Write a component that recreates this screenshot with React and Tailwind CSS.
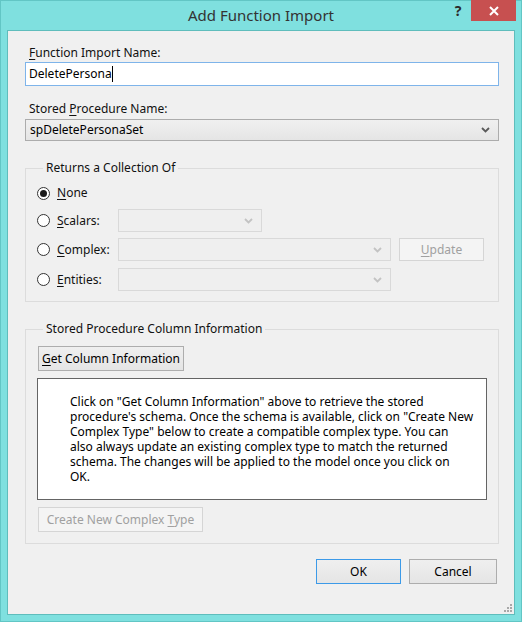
import React from "react";

const font = { fontFamily: '"Segoe UI", "Noto Sans", sans-serif' };

const Mn = ({ children }) => <span className="underline underline-offset-[2px] decoration-1">{children}</span>;

const Chevron = ({ disabled }) => (
  <svg width="9" height="6" viewBox="0 0 9 6" className="shrink-0">
    <path d="M1 1 L4.5 4.5 L8 1" fill="none" stroke={disabled ? "#c3c3c3" : "#5a5a5a"} strokeWidth="1.8" />
  </svg>
);

const Dropdown = ({ value, disabled, className }) => (
  <div
    className={
      "flex items-center pl-[4px] pr-[8px] border " +
      (disabled
        ? "border-[#d9d9d9] bg-[#efefef] "
        : "border-[#acacac] bg-gradient-to-b from-[#f0f0f0] to-[#e5e5e5] ") +
      className
    }
  >
    <span className="flex-1 text-black">{value}</span>
    <Chevron disabled={disabled} />
  </div>
);

const Radio = ({ checked, children }) => (
  <div className="flex items-center w-[81px] shrink-0">
    <span className="w-[13px] h-[13px] rounded-full border border-[#333] bg-white flex items-center justify-center">
      {checked && <span className="w-[7px] h-[7px] rounded-full bg-[#1a1a1a]" />}
    </span>
    <span className="ml-[7px]">{children}</span>
  </div>
);

const Button = ({ children, className, disabled, focused }) => (
  <div
    className={
      "flex items-center justify-center border " +
      (disabled
        ? "border-[#d5d5d5] bg-[#f4f4f4] text-[#a0a0a0] "
        : focused
        ? "border-[#3c9ae8] bg-gradient-to-b from-[#efefef] to-[#e5e5e5] text-black "
        : "border-[#adadad] bg-gradient-to-b from-[#efefef] to-[#e5e5e5] text-black ") +
      className
    }
  >
    {children}
  </div>
);

export default function App() {
  return (
    <div style={font} className="w-[522px] h-[622px] bg-[#7fe0df] border border-[#62c6c5] flex flex-col text-[12px] leading-[16px] text-[#111]">
      {/* title bar */}
      <div className="relative h-[29px] shrink-0">
        <div className="text-center text-[15px] leading-[28px] text-[#333]">Add Function Import</div>
        <div className="absolute top-[-1px] right-[5px] flex">
          <div className="w-[26px] h-[21px] flex items-center justify-center font-bold text-[14px] text-[#2b2b2b]">?</div>
          <div className="w-[45px] h-[21px] bg-[#c75050] flex items-center justify-center">
            <svg width="10" height="10" viewBox="0 0 10 10">
              <path d="M1 1 L9 9 M9 1 L1 9" stroke="#fff" strokeWidth="2" />
            </svg>
          </div>
        </div>
      </div>

      {/* client */}
      <div className="relative mx-[6px] h-[585px] border border-[#5fbdbc] bg-[#f0f0f0] pl-[17px] pr-[15px] flex flex-col">
        <div className="mt-[14px] pl-[4px]">
          <Mn>F</Mn>unction Import Name:
        </div>
        <div className="mt-[1px] h-[24px] border border-[#7eb4ea] bg-white flex items-center pl-[3px]">
          <span className="text-black">DeletePersona</span>
          <span className="w-px h-[16px] bg-black" />
        </div>

        <div className="mt-[15px] pl-[4px]">
          Stored <Mn>P</Mn>rocedure Name:
        </div>
        <Dropdown value="spDeletePersonaSet" className="mt-[2px] h-[22px]" />

        <fieldset className="mt-[19px] border border-[#dcdcdc] pl-[11px] pb-[12px] h-[142px]">
          <legend className="ml-[6px] px-[3px] leading-[16px]">Returns a Collection Of</legend>
          <div className="mt-[9px] flex items-center h-[16px]">
            <Radio checked>
              <Mn>N</Mn>one
            </Radio>
          </div>
          <div className="mt-[8px] flex items-center">
            <Radio>
              <Mn>S</Mn>calars:
            </Radio>
            <Dropdown disabled className="w-[144px] h-[23px]" />
          </div>
          <div className="mt-[6px] flex items-center">
            <Radio>
              <Mn>C</Mn>omplex:
            </Radio>
            <Dropdown disabled className="w-[273px] h-[23px]" />
            <Button disabled className="ml-[8px] w-[85px] h-[23px]">
              <span>
                <Mn>U</Mn>pdate
              </span>
            </Button>
          </div>
          <div className="mt-[7px] flex items-center">
            <Radio>
              <Mn>E</Mn>ntities:
            </Radio>
            <Dropdown disabled className="w-[273px] h-[23px]" />
          </div>
        </fieldset>

        <fieldset className="mt-[19px] border border-[#dcdcdc] pl-[11px] pr-[11px] h-[223px]">
          <legend className="ml-[6px] px-[3px] leading-[16px]">Stored Procedure Column Information</legend>
          <Button className="mt-[9px] w-[146px] h-[25px] ml-[1px]">
            <span>
              <Mn>G</Mn>et Column Information
            </span>
          </Button>
          <div className="mt-[7px] h-[122px] border border-[#646464] bg-white pl-[32px] pt-[15px] leading-[15px] text-black">
            Click on "Get Column Information" above to retrieve the stored
            <br />
            procedure's schema. Once the schema is available, click on "Create New
            <br />
            Complex Type" below to create a compatible complex type. You can
            <br />
            also always update an existing complex type to match the returned
            <br />
            schema. The changes will be applied to the model once you click on
            <br />
            OK.
          </div>
          <Button disabled className="mt-[7px] ml-[1px] w-[165px] h-[25px]">
            <span>
              Create New Complex <Mn>T</Mn>ype
            </span>
          </Button>
        </fieldset>

        <div className="mt-[15px] flex justify-end gap-[8px] pr-[2px]">
          <Button focused className="w-[85px] h-[25px]">OK</Button>
          <Button className="w-[88px] h-[25px]">Cancel</Button>
        </div>

        {/* resize grip */}
        <div className="absolute right-[2px] bottom-[2px] grid grid-cols-3 gap-[1px]">
          <span className="w-[2px] h-[2px]" />
          <span className="w-[2px] h-[2px]" />
          <span className="w-[2px] h-[2px] bg-[#a8a8a8]" />
          <span className="w-[2px] h-[2px]" />
          <span className="w-[2px] h-[2px] bg-[#a8a8a8]" />
          <span className="w-[2px] h-[2px] bg-[#a8a8a8]" />
          <span className="w-[2px] h-[2px] bg-[#a8a8a8]" />
          <span className="w-[2px] h-[2px] bg-[#a8a8a8]" />
          <span className="w-[2px] h-[2px] bg-[#a8a8a8]" />
        </div>
      </div>
    </div>
  );
}
